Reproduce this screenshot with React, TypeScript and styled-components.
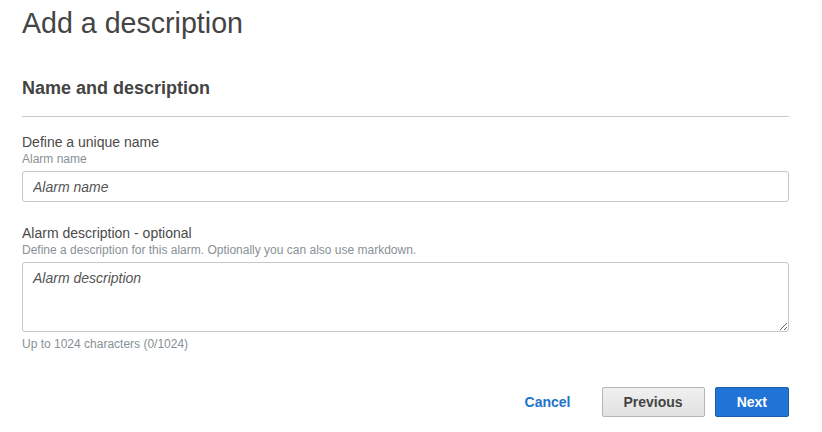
import React from "react";
import styled, { createGlobalStyle } from "styled-components";

const GlobalStyle = createGlobalStyle`
  html, body {
    margin: 0;
    padding: 0;
    background: #ffffff;
  }
  body {
    font-family: "Liberation Sans", Arial, Helvetica, sans-serif;
    color: #444444;
  }
  * { box-sizing: border-box; }
`;

const Page = styled.div`
  width: 822px;
  height: 432px;
  padding: 6px 33px 0 22px;
  display: flex;
  flex-direction: column;
  overflow: hidden;
`;

const Title = styled.h1`
  margin: 0;
  font-size: 28.6px;
  line-height: 34px;
  font-weight: 400;
  color: #444444;
`;

const SectionHeading = styled.h2`
  margin: 37px 0 0;
  padding-bottom: 17px;
  font-size: 18px;
  line-height: 22px;
  font-weight: 700;
  color: #444444;
  border-bottom: 1px solid #c9c9c9;
`;

const Field = styled.div<{ $gap: number }>`
  display: flex;
  flex-direction: column;
  margin-top: ${(p) => p.$gap}px;
`;

const Label = styled.label`
  font-size: 14px;
  line-height: 18px;
  color: #4a4a4a;
`;

const Hint = styled.div`
  font-size: 12px;
  line-height: 16px;
  color: #879196;
`;

const TextInput = styled.input`
  margin-top: 4px;
  width: 100%;
  height: 31px;
  padding: 0 10px;
  border: 1px solid #c6c6c6;
  border-radius: 3px;
  font-family: "Liberation Sans", Arial, sans-serif;
  font-size: 14px;
  color: #444444;
  outline: none;
  &::placeholder {
    color: #555555;
    font-style: italic;
  }
`;

const TextArea = styled.textarea`
  margin-top: 4px;
  width: 100%;
  height: 70px;
  padding: 5px 10px;
  border: 1px solid #c6c6c6;
  border-radius: 3px;
  font-family: "Liberation Sans", Arial, sans-serif;
  font-size: 14px;
  line-height: 20px;
  color: #444444;
  resize: vertical;
  outline: none;
  display: block;
  &::placeholder {
    color: #555555;
    font-style: italic;
  }
`;

const Counter = styled.div`
  margin-top: 4px;
  font-size: 12px;
  line-height: 16px;
  color: #879196;
`;

const Actions = styled.div`
  margin-top: 35px;
  display: flex;
  justify-content: flex-end;
  align-items: center;
  gap: 10px;
`;

const Button = styled.button<{ $variant: "link" | "normal" | "primary" }>`
  height: 30px;
  padding: 0 21px;
  font-family: "Liberation Sans", Arial, sans-serif;
  font-size: 14px;
  font-weight: 700;
  border-radius: 2px;
  cursor: pointer;
  ${(p) =>
    p.$variant === "link"
      ? `
    background: transparent;
    border: 1px solid transparent;
    color: #1f73c9;
    padding: 0 20px;
  `
      : p.$variant === "primary"
      ? `
    background: #2074d5;
    border: 1px solid #1a5ca8;
    color: #ffffff;
  `
      : `
    background: linear-gradient(#f0f0f0, #e2e2e2);
    border: 1px solid #b5b5b5;
    color: #444444;
  `}
`;

export default function App() {
  return (
    <>
      <GlobalStyle />
      <Page>
        <Title>Add a description</Title>
        <SectionHeading>Name and description</SectionHeading>
        <Field $gap={16}>
          <Label>Define a unique name</Label>
          <Hint>Alarm name</Hint>
          <TextInput placeholder="Alarm name" />
        </Field>
        <Field $gap={22}>
          <Label>Alarm description - optional</Label>
          <Hint>
            Define a description for this alarm. Optionally you can also use
            markdown.
          </Hint>
          <TextArea placeholder="Alarm description" />
          <Counter>Up to 1024 characters (0/1024)</Counter>
        </Field>
        <Actions>
          <Button $variant="link">Cancel</Button>
          <Button $variant="normal">Previous</Button>
          <Button $variant="primary">Next</Button>
        </Actions>
      </Page>
    </>
  );
}
